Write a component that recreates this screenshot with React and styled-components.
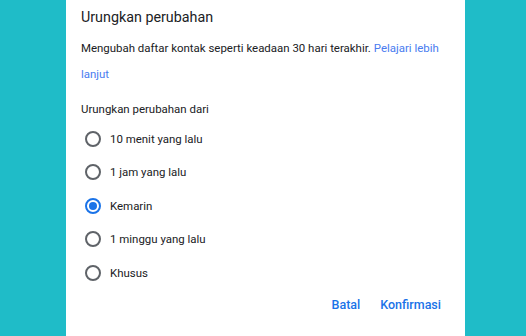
import React, { useState } from "react";
import styled, { createGlobalStyle } from "styled-components";

const Global = createGlobalStyle`
  html, body { margin: 0; padding: 0; }
  body { background: #1fbcc8; font-family: Roboto, "Noto Sans", Arial, sans-serif; }
`;

const Page = styled.div`
  width: 526px;
  height: 336px;
  display: flex;
  justify-content: flex-start;
  overflow: hidden;
  background: #1fbcc8;
`;

const Dialog = styled.div`
  margin-left: 66px;
  width: 399px;
  height: 336px;
  background: #ffffff;
  box-sizing: border-box;
  padding: 7px 15px 0 15px;
  display: flex;
  flex-direction: column;
`;

const Title = styled.h2`
  margin: 0;
  font-family: Roboto, sans-serif;
  font-weight: 400;
  font-size: 14.3px;
  line-height: 20px;
  color: #202124;
`;

const Desc = styled.p`
  margin: 8px 0 0 0;
  font-size: 11.45px;
  line-height: 26px;
  color: #202124;
`;

const Link = styled.a`
  color: #4a7cf0;
  text-decoration: none;
`;

const Label = styled.div`
  margin-top: 13px;
  font-size: 11.45px;
  line-height: 18px;
  color: #202124;
`;

const List = styled.div`
  display: flex;
  flex-direction: column;
  margin-top: 4px;
`;

const Option = styled.label`
  display: flex;
  align-items: center;
  height: 33.5px;
  gap: 9px;
  font-size: 11.45px;
  color: #202124;
  cursor: pointer;
  padding-left: 4px;
`;

const Circle = styled.span`
  width: 16px;
  height: 16px;
  border-radius: 50%;
  box-sizing: border-box;
  border: 2px solid ${(p) => (p.$on ? "#1a73e8" : "#5f6368")};
  display: flex;
  align-items: center;
  justify-content: center;
  &::after {
    content: "";
    width: 8px;
    height: 8px;
    border-radius: 50%;
    background: ${(p) => (p.$on ? "#1a73e8" : "transparent")};
  }
`;

const Actions = styled.div`
  display: flex;
  justify-content: flex-end;
  gap: 20px;
  margin-top: 5px;
  padding-right: 9px;
`;

const Btn = styled.button`
  border: none;
  background: none;
  padding: 0;
  font-family: Roboto, sans-serif;
  font-weight: 500;
  font-size: 12.5px;
  line-height: 20px;
  color: #1a73e8;
  cursor: pointer;
`;

const options = [
  "10 menit yang lalu",
  "1 jam yang lalu",
  "Kemarin",
  "1 minggu yang lalu",
  "Khusus",
];

export default function App() {
  const [sel, setSel] = useState(2);
  return (
    <Page>
      <Global />
      <Dialog>
        <Title>Urungkan perubahan</Title>
        <Desc>
          Mengubah daftar kontak seperti keadaan 30 hari terakhir.{" "}
          <Link href="#">Pelajari lebih lanjut</Link>
        </Desc>
        <Label>Urungkan perubahan dari</Label>
        <List>
          {options.map((o, i) => (
            <Option key={o} onClick={() => setSel(i)}>
              <Circle $on={sel === i} />
              {o}
            </Option>
          ))}
        </List>
        <Actions>
          <Btn>Batal</Btn>
          <Btn>Konfirmasi</Btn>
        </Actions>
      </Dialog>
    </Page>
  );
}
